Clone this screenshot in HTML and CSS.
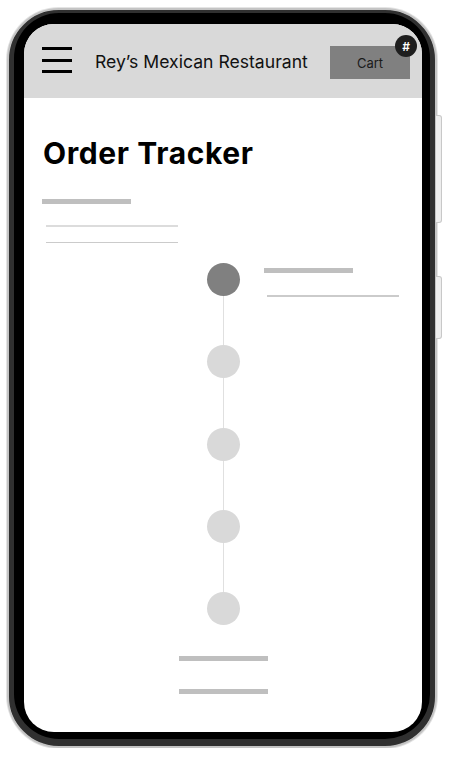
FILE: index.html
```html
<!DOCTYPE html>
<html>
<head>
  <meta charset="UTF-8">
  <title>Order Tracker</title>
  <link rel="stylesheet" href="styles.css">
</head>
<body>

  <div class="phone">
    <div class="screen">

      <header class="topbar">
        <div class="burger"><span></span><span></span><span></span></div>
        <div class="brand">Rey’s Mexican Restaurant</div>
        <div class="cart">Cart<span class="badge">#</span></div>
      </header>

      <main class="content">
        <h1 class="title">Order Tracker</h1>
        <div class="bar"></div>
        <div class="rule rule-light"></div>
        <div class="rule"></div>

        <div class="tracker">
          <span class="dot dot-done"></span>
          <div class="step-info">
            <div class="bar"></div>
            <div class="rule rule-wide"></div>
          </div>
          <span class="link"></span>
          <span class="dot"></span>
          <span class="link"></span>
          <span class="dot"></span>
          <span class="link"></span>
          <span class="dot"></span>
          <span class="link"></span>
          <span class="dot"></span>
        </div>

        <div class="bottom-bars">
          <div class="bar"></div>
          <div class="bar"></div>
        </div>
      </main>

    </div>
    <span class="side-btn side-btn-top"></span>
    <span class="side-btn side-btn-low"></span>
  </div>

</body>
</html>
```

FILE: styles.css
```css
* {
  box-sizing: border-box;}
html, body {
  margin: 0;
  background: #fff;
  font-family: Inter, "Liberation Sans", sans-serif;}

/* phone frame */
.phone {
  position: relative;
  width: 430px; height: 740px;
  margin: 8px 0 0 7px;
  padding: 14px 13px 14px 15px;
  border: 2px solid #c4c4c4;
  border-radius: 52px;
  background: #000;
  box-shadow: inset 0 -2px 0 5px #303030, 0 0 0 1px #e4e4e4;}
.screen {
  width: 398px; height: 708px;
  border-radius: 30px;
  overflow: hidden;
  background: #fff;
  display: flex;
  flex-direction: column;}
.side-btn {
  position: absolute;
  right: -7px;
  width: 6px;
  background: #ededed;
  border: 1px solid #c8c8c8;
  border-left: none;
  border-radius: 0 3px 3px 0;}
.side-btn-top { top: 105px; height: 108px;}
.side-btn-low { top: 266px; height: 63px;}

/* header */
.topbar {
  height: 74px;
  flex: none;
  background: #d9d9d9;
  display: flex;
  align-items: center;
  padding: 0 12px 0 18px;}
.burger {
  width: 30px;
  display: flex;
  flex-direction: column;
  gap: 8.5px;
  margin-top: -2px;}
.burger span {
  height: 3px;
  background: #000;}
.brand {
  margin-left: 23px;
  font-size: 17.6px;
  color: #111;
  white-space: nowrap;}
.cart {
  position: relative;
  margin-left: auto;
  width: 80px; height: 33px;
  margin-top: 3px;
  background: #808080;
  color: #1a1a1a;
  font-size: 13px;
  display: flex;
  align-items: center;
  justify-content: center;}
.badge {
  position: absolute;
  top: -11px; right: -7px;
  width: 22px; height: 22px;
  border-radius: 50%;
  background: #1e1e1e;
  color: #fff;
  font-size: 12px;
  font-weight: 600;
  display: flex;
  align-items: center;
  justify-content: center;}

/* content */
.content {
  padding: 38px 18px 0 18px;
  display: flex;
  flex-direction: column;
  align-items: flex-start;}
.title {
  margin: 0 0 0 1px;
  font-size: 30px;
  line-height: 34px;
  font-weight: 700;
  letter-spacing: 0.6px;
  color: #000;}
.bar {
  width: 89px; height: 5px;
  background: #bfbfbf;}
.content > .bar {
  margin-top: 29px;}
.rule {
  width: 132px; height: 1.5px;
  margin: 15px 0 0 4px;
  background: #cbcbcb;}
.rule-light {
  margin-top: 21px;
  background: #dcdcdc;}

/* tracker */
.tracker {
  margin: 20px 0 0 165px;
  display: grid;
  grid-template-columns: 33px auto;
  column-gap: 24px;}
.dot {
  grid-column: 1;
  width: 33px; height: 33px;
  border-radius: 50%;
  background: #d9d9d9;}
.dot-done {
  background: #808080;}
.link {
  grid-column: 1;
  justify-self: center;
  width: 1.5px; height: 49.3px;
  background: #e0e0e0;}
.step-info {
  grid-column: 2;
  grid-row: 1;
  height: 33px;
  padding-top: 5px;}
.step-info .rule {
  margin: 22px 0 0 3px;}

.bottom-bars {
  align-self: center;
  margin: 31px 0 0 1px;
  display: flex;
  flex-direction: column;
  gap: 28px;}
```
